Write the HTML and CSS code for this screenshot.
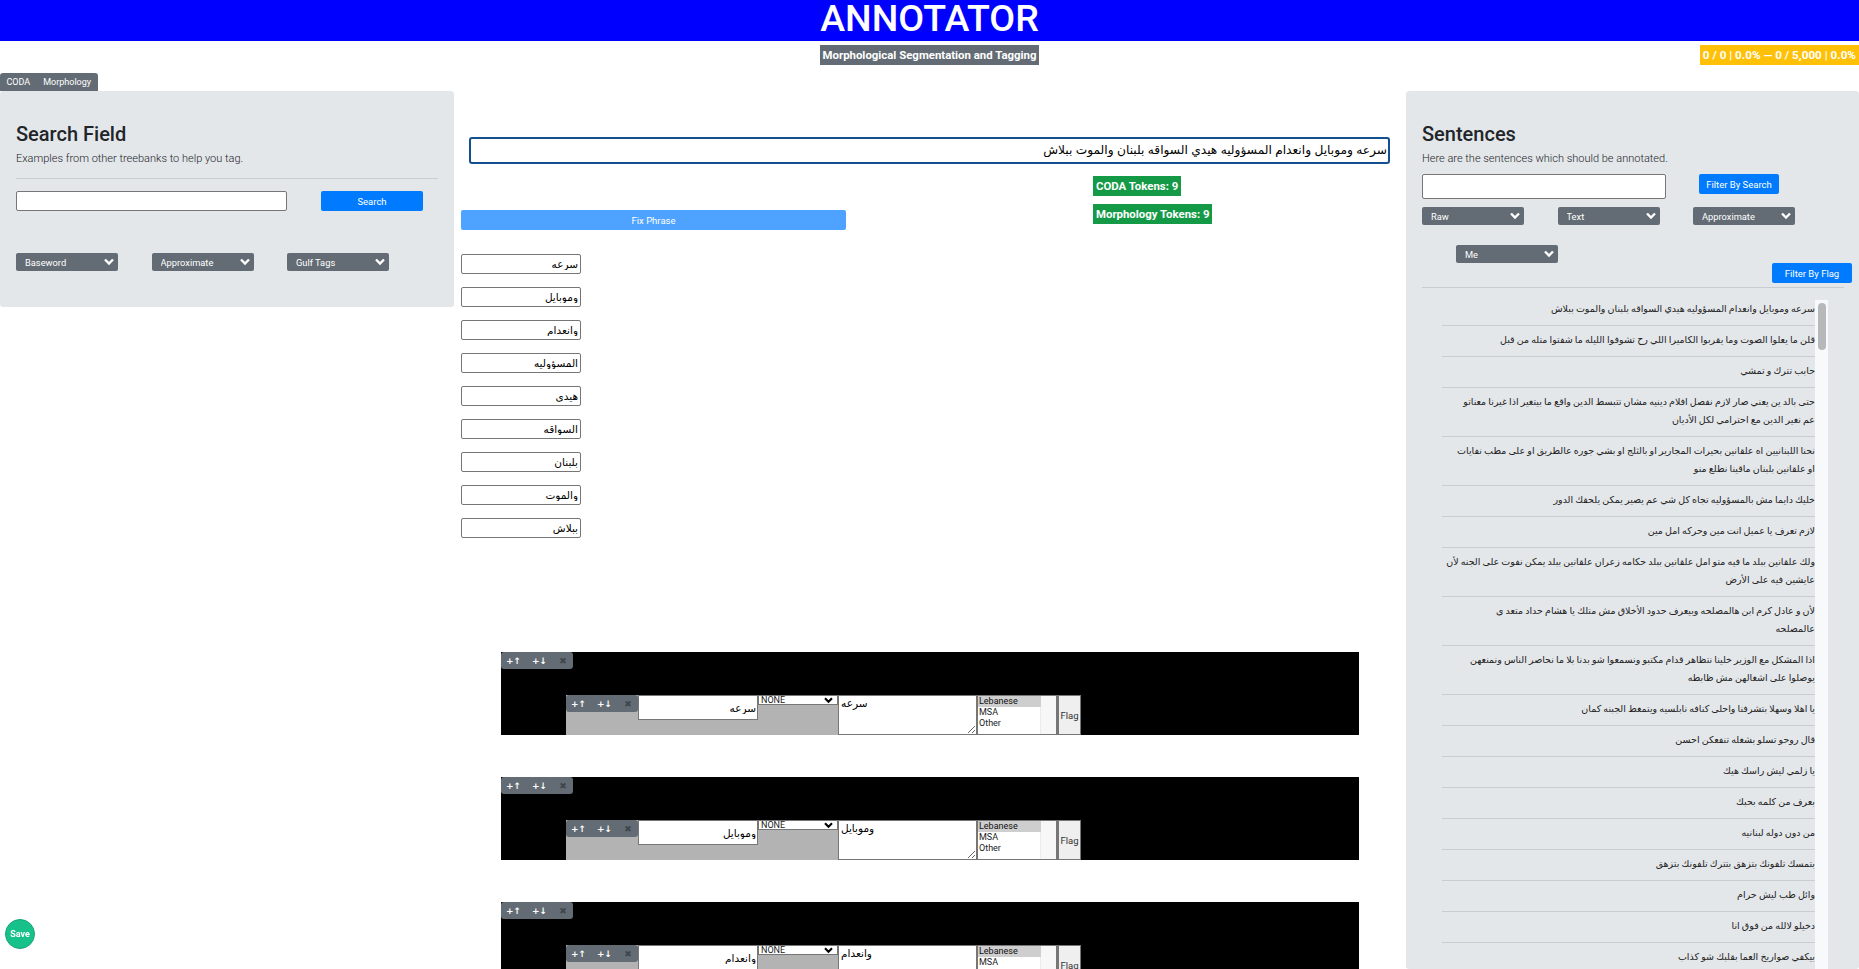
FILE: index.html
```html
<!DOCTYPE html>
<html lang="en">
<head>
    <meta charset="UTF-8">
    <meta name="viewport" content="width=device-width, initial-scale=1.0">
    <title>Annotator</title>
    <link rel="stylesheet" href="styles.css">
</head>
<body>
    <div class="header"><h1>ANNOTATOR</h1></div>
    <div class="status-row">
        <span></span>
        <span class="badge badge-title">Morphological Segmentation and Tagging</span>
        <span class="badge badge-progress">0 / 0 | 0.0% — 0 / 5,000 | 0.0%</span>
    </div>
    <div class="tabs">
        <button class="tab">CODA</button>
        <button class="tab">Morphology</button>
    </div>

    <div class="main">
        <!-- left: search -->
        <div class="panel panel-search">
            <h3>Search Field</h3>
            <p class="lead">Examples from other treebanks to help you tag.</p>
            <hr class="rule">
            <div class="search-row">
                <input type="text" class="field search-input">
                <button class="btn btn-search">Search</button>
            </div>
            <div class="select-row select-row-search">
                <select class="pick"><option>Baseword</option></select>
                <select class="pick"><option>Approximate</option></select>
                <select class="pick"><option>Gulf Tags</option></select>
            </div>
        </div>

        <!-- middle: annotation -->
        <div class="work">
            <input type="text" class="phrase" dir="rtl" value="سرعه وموبايل وانعدام المسؤوليه هيدي السواقه بلبنان والموت ببلاش">
            <div class="phrase-row">
                <button class="btn btn-fix">Fix Phrase</button>
                <div class="counts">
                    <span class="badge badge-count">CODA Tokens: 9</span>
                    <span class="badge badge-count">Morphology Tokens: 9</span>
                </div>
            </div>
            <div class="words">
                <input type="text" class="field word" dir="rtl" value="سرعه">
                <input type="text" class="field word" dir="rtl" value="وموبايل">
                <input type="text" class="field word" dir="rtl" value="وانعدام">
                <input type="text" class="field word" dir="rtl" value="المسؤوليه">
                <input type="text" class="field word" dir="rtl" value="هيدي">
                <input type="text" class="field word" dir="rtl" value="السواقه">
                <input type="text" class="field word" dir="rtl" value="بلبنان">
                <input type="text" class="field word" dir="rtl" value="والموت">
                <input type="text" class="field word" dir="rtl" value="ببلاش">
            </div>
            <div class="tokens">
                <div class="token">
                    <div class="mini"><button>+↑</button><button>+↓</button><button class="x">✖</button></div>
                    <div class="seg">
                        <div class="mini"><button>+↑</button><button>+↓</button><button class="x">✖</button></div>
                        <input type="text" class="seg-input" dir="rtl" value="سرعه">
                        <select class="seg-pos"><option>NONE</option></select>
                        <textarea class="seg-text">سرعه</textarea>
                        <select class="seg-lang" size="3"><option selected>Lebanese</option><option>MSA</option><option>Other</option></select>
                        <button class="seg-flag">Flag</button>
                    </div>
                </div>
                <div class="token">
                    <div class="mini"><button>+↑</button><button>+↓</button><button class="x">✖</button></div>
                    <div class="seg">
                        <div class="mini"><button>+↑</button><button>+↓</button><button class="x">✖</button></div>
                        <input type="text" class="seg-input" dir="rtl" value="وموبايل">
                        <select class="seg-pos"><option>NONE</option></select>
                        <textarea class="seg-text">وموبايل</textarea>
                        <select class="seg-lang" size="3"><option selected>Lebanese</option><option>MSA</option><option>Other</option></select>
                        <button class="seg-flag">Flag</button>
                    </div>
                </div>
                <div class="token">
                    <div class="mini"><button>+↑</button><button>+↓</button><button class="x">✖</button></div>
                    <div class="seg">
                        <div class="mini"><button>+↑</button><button>+↓</button><button class="x">✖</button></div>
                        <input type="text" class="seg-input" dir="rtl" value="وانعدام">
                        <select class="seg-pos"><option>NONE</option></select>
                        <textarea class="seg-text">وانعدام</textarea>
                        <select class="seg-lang" size="3"><option selected>Lebanese</option><option>MSA</option><option>Other</option></select>
                        <button class="seg-flag">Flag</button>
                    </div>
                </div>
            </div>
        </div>

        <!-- right: sentences -->
        <div class="panel panel-sentences">
            <h3>Sentences</h3>
            <p class="lead">Here are the sentences which should be annotated.</p>
            <div class="filter-row">
                <input type="text" class="field filter-input">
                <button class="btn btn-filter">Filter By Search</button>
            </div>
            <div class="select-row select-row-filter">
                <select class="pick"><option>Raw</option></select>
                <select class="pick"><option>Text</option></select>
                <select class="pick"><option>Approximate</option></select>
            </div>
            <div class="flag-row">
                <select class="pick"><option>Me</option></select>
                <button class="btn btn-flag">Filter By Flag</button>
            </div>
            <hr class="rule rule-sentences">
            <div class="sentence-box">
                <ul class="sentences" dir="rtl">
                    <li>سرعه وموبايل وانعدام المسؤوليه هيدي السواقه بلبنان والموت ببلاش</li>
                    <li>قلن ما يعلوا الصوت وما يقربوا الكاميرا اللي رح تشوفوا الليله ما شفتوا متله من قبل</li>
                    <li>حابب تترك و تمشي</li>
                    <li>حتى بالد ين يعني صار لازم نفصل افلام دينيه مشان تتبسط الدين واقع ما بيتغير اذا غيرنا معناتو<br>عم نغير الدين مع احترامي لكل الأديان</li>
                    <li>نحنا اللبنانيين اه علقانين بحيرات المجارير او بالثلج او بشي جوره عالطريق او على مطب نفايات<br>او علقانين بلبنان ماقينا نطلع منو</li>
                    <li>خليك دايما مش بالمسؤوليه تجاه كل شي عم يصير يمكن يلحقك الدور</li>
                    <li>لازم تعرف يا عميل انت مين وحركه امل مين</li>
                    <li>ولك علقانين ببلد ما فيه متو امل علقانين ببلد حكامه زعران علقانين ببلد يمكن نفوت على الجنه لأن<br>عايشين فيه على الأرض</li>
                    <li>لأن و عادل كرم ابن هالمصلحه وبيعرف حدود الأخلاق مش متلك يا هشام حداد متعد ى<br>عالمصلحه</li>
                    <li>اذا المشكل مع الوزير خلينا نتظاهر قدام مكتبو ونسمعوا شو بدنا بلا ما نحاصر الناس ونمنعهن<br>يوصلوا على اشغالهن مش ظابطه</li>
                    <li>يا اهلا وسهلا بتشرفنا واحلى كنافه نابلسيه ويتمغط الجبنه كمان</li>
                    <li>قال روحو تسلو بشغله تنفعكن احسن</li>
                    <li>يا زلمي ليش راسك هيك</li>
                    <li>بعرف من كلمه بحبك</li>
                    <li>من دون دوله لبنانيه</li>
                    <li>بتمسك تلفونك بتزهق بتترك تلفونك بتزهق</li>
                    <li>وائل طب ليش حرام</li>
                    <li>دخيلو لالله من فوق انا</li>
                    <li>بيكفي صواريخ العما بقلبك شو كذاب</li>
                </ul>
                <div class="scroll-track"><div class="scroll-thumb"></div></div>
            </div>
        </div>
    </div>

    <button class="save">Save</button>
</body>
</html>
```

FILE: styles.css
```css
* {
    box-sizing: border-box;
}
html, body {
    height: 100%;
}
body {
    margin: 0;
    display: flex;
    flex-direction: column;
    overflow: hidden;
    background: white;
    color: #212529;
    font-family: Roboto, "Liberation Sans", "DejaVu Sans", sans-serif;
    font-size: 10px;
}
button {
    font-family: Roboto, sans-serif;
    cursor: pointer;
}

.header {
    height: 41px;
    flex: none;
    background: #0000ff;
    color: white;
    text-align: center;
}
.header h1 {
    margin: 0;
    font-size: 37.5px;
    font-weight: 500;
    line-height: 37px;
}

.status-row {
    flex: none;
    display: grid;
    grid-template-columns: 1fr auto 1fr;
    margin-top: 4px;
}
.badge {
    height: 20px;
    padding: 0 3px;
    color: white;
    font-size: 11.4px;
    font-weight: 700;
    line-height: 20px;
    white-space: nowrap;
}
.badge-title {
    background: #636c74;
}
.badge-progress {
    justify-self: end;
    background: #ffc107;
    font-size: 11.7px;
}

.tabs {
    flex: none;
    display: flex;
    align-self: flex-start;
    margin-top: 8px;
    background: #636c74;
    border-radius: 3px 3px 0 0;
}
.tab {
    height: 18px;
    padding: 0 6.5px;
    border: 0;
    background: none;
    color: white;
    font-size: 9px;
}

.main {
    flex: 1;
    min-height: 0;
    display: grid;
    grid-template-columns: 454px 952px 453px;
}

.panel {
    background: #e4e7ea;
    border-radius: 3px;
    padding: 31px 0 0 16px;
}
.panel-search {
    align-self: start;
    height: 216px;
}
.panel h3 {
    margin: 0;
    font-size: 20px;
    font-weight: 500;
    line-height: 25px;
}
.lead {
    margin: 3px 0 0;
    font-size: 11px;
    font-weight: 300;
    line-height: 18px;
}
.rule {
    width: 422px;
    margin: 10px 0 12px;
    border: 0;
    border-top: 1px solid #c9ccd0;
}

.field {
    display: block;
    height: 20px;
    border: 1px solid #767676;
    border-radius: 2px;
    background: white;
    font-family: "Liberation Sans", "DejaVu Sans", sans-serif;
    font-size: 12px;
    padding: 1px 2px;
}
.btn {
    height: 20px;
    padding: 0;
    border: 0;
    border-radius: 2px;
    background: #007bff;
    color: white;
    font-size: 9.5px;
}

.search-row {
    display: flex;
    gap: 34px;
}
.search-input {
    width: 271px;
}
.btn-search {
    width: 102px;
}

.select-row {
    display: flex;
    gap: 33.5px;
}
.select-row-search {
    margin-top: 42px;
}
.pick {
    appearance: none;
    width: 102px;
    height: 18px;
    padding: 0 9px;
    border: 0;
    border-radius: 2px;
    background: #636c74 url("data:image/svg+xml,%3Csvg xmlns='http://www.w3.org/2000/svg' viewBox='0 0 10 8'%3E%3Cpath d='M1 1.5l4 4 4-4' fill='none' stroke='white' stroke-width='2.4'/%3E%3C/svg%3E") no-repeat right 4px center / 10px 8px;
    color: white;
    font-family: Roboto, sans-serif;
    font-size: 9.3px;
}

/* middle column */
.work {
    padding: 46px 0 0 7px;
    overflow: hidden;
}
.phrase {
    display: block;
    width: 921px;
    height: 27px;
    margin-left: 8px;
    padding: 0 1px 2px;
    border: 2px solid #12508f;
    border-radius: 3px;
    color: black;
    font-family: "Liberation Sans", "DejaVu Sans", sans-serif;
    font-size: 12.2px;
}
.phrase-row {
    display: flex;
    margin-top: 12px;
}
.btn-fix {
    width: 385px;
    margin-top: 34px;
    background: #4da3ff;
}
.counts {
    display: flex;
    flex-direction: column;
    align-items: flex-start;
    gap: 8px;
    margin-left: 247px;
}
.badge-count {
    background: #149a46;
}
.words {
    display: flex;
    flex-direction: column;
    gap: 13px;
    margin-top: 24px;
}
.word {
    width: 120px;
    color: black;
    font-size: 10.5px;
}

.tokens {
    display: flex;
    flex-direction: column;
    gap: 42px;
    margin: 114px 0 0 40px;
}
.token {
    flex: none;
    width: 858px;
    height: 83px;
    background: black;
}
.mini {
    display: flex;
    width: 72px;
    height: 17px;
    background: #636c74;
    border-radius: 3px;
}
.mini button {
    width: 25px;
    padding: 0;
    border: 0;
    background: none;
    color: white;
    font-family: "DejaVu Sans", sans-serif;
    font-size: 9px;
    font-weight: 700;
    white-space: nowrap;
}
.mini button:nth-child(2) {
    width: 27px;
}
.mini .x {
    width: 20px;
    color: #3f464c;
}

.seg {
    display: inline-flex;
    height: 40px;
    margin: 26px 0 0 65px;
    background: #b3b3b3;
    vertical-align: top;
}
.seg-input {
    width: 120px;
    height: 25px;
    padding: 0 1px;
    border: 1px solid #767676;
    color: black;
    font-family: "Liberation Sans", "DejaVu Sans", sans-serif;
    font-size: 10.5px;
}
.seg-pos {
    appearance: none;
    width: 80px;
    height: 10px;
    padding: 0 2px;
    border: 1px solid #767676;
    border-radius: 0;
    background: white url("data:image/svg+xml,%3Csvg xmlns='http://www.w3.org/2000/svg' viewBox='0 0 10 8'%3E%3Cpath d='M1 1.5l4 4 4-4' fill='none' stroke='black' stroke-width='2.4'/%3E%3C/svg%3E") no-repeat right 4px center / 9px 7px;
    color: #222;
    font-family: Roboto, sans-serif;
    font-size: 9px;
    line-height: 8px;
}
.seg-text {
    width: 139px;
    height: 40px;
    padding: 1px 2px;
    border: 1px solid #767676;
    color: black;
    font-family: "Liberation Sans", "DejaVu Sans", sans-serif;
    font-size: 10.5px;
}
/* no real overflow here, so the scrollbar gutter is painted */
.seg-lang {
    width: 80px;
    height: 40px;
    padding: 0 15px 0 0;
    border: 1px solid #767676;
    border-radius: 0;
    background: linear-gradient(to left, #f7f7f7 15px, #ececec 15px, #ececec 16px, white 16px);
    color: #222;
    font-family: Roboto, sans-serif;
    font-size: 9px;
}
.seg-lang option {
    padding: 0 1px;
}
.seg-flag {
    width: 24px;
    height: 40px;
    padding: 0;
    border: 1px solid #767676;
    border-left-width: 2px;
    background: #efefef;
    color: #333;
    font-size: 9.5px;
}

/* right column */
.panel-sentences {
    overflow: hidden;
}
.filter-row {
    display: flex;
    align-items: flex-start;
    margin-top: 6px;
}
.filter-input {
    width: 244px;
    height: 25px;
}
.btn-filter {
    width: 80px;
    margin-left: 33px;
}
.select-row-filter {
    margin-top: 8px;
}
.flag-row {
    display: flex;
    align-items: flex-start;
    margin-top: 20px;
    padding: 0 7px 0 34px;
}
.btn-flag {
    width: 80px;
    margin-top: 18px;
    margin-left: auto;
}
.rule-sentences {
    margin: 4px 0 12px;
}

.sentence-box {
    display: flex;
    margin-left: 20px;
    width: 386px;
}
.sentences {
    width: 373px;
    margin: 0;
    padding: 0;
    list-style: none;
    color: #222;
    font-family: "Liberation Sans", "DejaVu Sans", sans-serif;
    font-size: 9.5px;
    word-spacing: -0.5px;
    line-height: 18px;
}
.sentences li {
    padding: 5px 0 7px;
    border-bottom: 1px solid #c9ccd0;
}
.sentences li:first-child {
    padding-top: 0;
}
.scroll-track {
    width: 13px;
    padding: 3px 2px 0 3px;
    background: #f8f9fa;
}
.scroll-thumb {
    height: 47px;
    border-radius: 4px;
    background: #b7b8ba;
}

.save {
    position: fixed;
    left: 5px;
    top: 919px;
    width: 30px;
    height: 30px;
    padding: 0;
    border: 1px solid #1aa37a;
    border-radius: 50%;
    background: #17c18a;
    color: white;
    font-size: 9px;
    font-weight: 700;
}
```
